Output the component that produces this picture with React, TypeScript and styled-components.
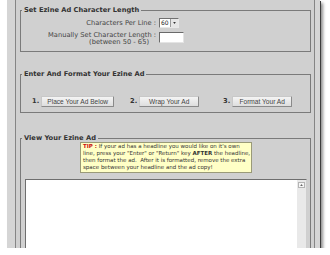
import React from 'react';
import styled, { createGlobalStyle } from 'styled-components';

const GlobalStyle = createGlobalStyle`
  html, body {
    margin: 0;
    padding: 0;
    background: #fff;
  }
  body {
    font-family: "DejaVu Sans", Verdana, sans-serif;
  }
`;

/* outer framed panel with the drop shadow */
const Frame = styled.div`
  box-sizing: border-box;
  width: 313px;
  height: 248px;
  margin-left: 7px;
  padding: 0 5px 0 8px;
  background: #d5d5d5;
  box-shadow: 1px 1px 0 #3c3c3c, 3px 3px 3px rgba(0, 0, 0, 0.45);
  overflow: hidden;
  display: flex;
`;

const Inner = styled.div`
  flex: 1;
  display: flex;
  flex-direction: column;
  padding: 6px 3px 0 4px;
  border-left: 1px solid #858585;
  border-right: 1px solid #858585;
  background: #d0d0d0;
`;

const Group = styled.fieldset<{ $gapTop?: number }>`
  margin: ${p => p.$gapTop ?? 0}px 0 0;
  padding: 0;
  min-width: 0;
  border: 1px solid #7a7a7a;
`;

const Legend = styled.legend`
  margin-left: 1px;
  padding: 0 2px;
  font: bold 6.7px/8px "DejaVu Sans", Verdana, sans-serif;
  color: #333;
`;

/* character length settings */
const SettingsGrid = styled.div`
  display: grid;
  grid-template-columns: 135px auto;
  column-gap: 3px;
  row-gap: 4px;
  padding: 4px 0 5px;
`;

const Label = styled.div<{ $lh?: number }>`
  font-size: 6.7px;
  line-height: ${p => p.$lh ?? 10}px;
  color: #444;
  text-align: right;
  white-space: nowrap;
  align-self: ${p => (p.$lh ? 'start' : 'center')};
`;

const LabelNote = styled.span`
  display: block;
  padding-right: 7px;
`;

const Select = styled.div`
  display: flex;
  box-sizing: border-box;
  width: 20px;
  height: 10px;
  border: 1px solid;
  border-color: #707070 #e8e8e8 #e8e8e8 #707070;
  background: #fff;
  justify-self: start;
`;

const SelectValue = styled.span`
  flex: 1;
  padding-left: 1px;
  font-size: 6px;
  line-height: 8px;
  color: #222;
`;

const SelectArrow = styled.span`
  display: flex;
  align-items: center;
  justify-content: center;
  width: 7px;
  background: #e6e6e6;
  border-left: 1px solid #9a9a9a;
`;

const TextInput = styled.input`
  box-sizing: border-box;
  width: 25px;
  height: 11px;
  margin: 0;
  padding: 0;
  border: 1px solid;
  border-color: #6a6a6a #e4e4e4 #e4e4e4 #6a6a6a;
  background: #fff;
  justify-self: start;
`;

/* format steps */
const Steps = styled.div`
  display: grid;
  grid-template-columns: 98px 93px 1fr;
  padding: 18px 0 5px 11px;
`;

const Step = styled.div`
  display: flex;
  align-items: center;
`;

const StepNum = styled.span`
  font: bold 6.7px/11px "DejaVu Sans", Verdana, sans-serif;
  color: #333;
  margin-right: 2px;
`;

const Button = styled.button<{ $w: number }>`
  box-sizing: border-box;
  width: ${p => p.$w}px;
  height: 11px;
  margin: 0;
  padding: 0;
  font: 6.6px/9px "Liberation Sans", Arial, sans-serif;
  color: #444;
  background: linear-gradient(#f4f4f4, #dedede);
  border: 1px solid;
  border-color: #c8c8c8 #8a8a8a #8a8a8a #c8c8c8;
  border-radius: 1px;
`;

/* view area */
const Tip = styled.div`
  box-sizing: border-box;
  width: 172px;
  margin-left: 59px;
  padding: 0 2px 1px;
  background: #ffffc6;
  border: 1px solid #9a9a78;
  font-size: 5.5px;
  line-height: 7px;
  color: #333;
  white-space: nowrap;
  overflow: hidden;
`;

const TipMark = styled.b`
  color: #cc1111;
`;

const TextBox = styled.div`
  display: flex;
  height: 90px;
  margin: 6px 3px 0 4px;
  border: 1px solid;
  border-color: #6e6e6e #cfcfcf #cfcfcf #6e6e6e;
  background: #fff;
`;

const Area = styled.textarea`
  flex: 1;
  margin: 0;
  padding: 2px;
  border: none;
  resize: none;
  outline: none;
  background: #fff;
`;

const ScrollTrack = styled.div`
  width: 9px;
  background: #e9e9e9;
  display: flex;
  flex-direction: column;
  align-items: center;
  padding-top: 2px;
`;

const ScrollArrow = styled.div`
  box-sizing: border-box;
  width: 7px;
  height: 6px;
  border: 1px solid #b4b4b4;
  background: #f6f6f6;
  display: flex;
  align-items: center;
  justify-content: center;
`;

const Caret = ({ up, color = '#333' }: { up?: boolean; color?: string }) => (
  <svg width="3" height="2" viewBox="0 0 4 3">
    <path d={up ? 'M0 3 L2 0 L4 3 Z' : 'M0 0 L4 0 L2 3 Z'} fill={color} />
  </svg>
);

const App: React.FC = () => {
  return (
    <>
      <GlobalStyle />
      <Frame>
        <Inner>
          <Group>
            <Legend>Set Ezine Ad Character Length</Legend>
            <SettingsGrid>
              <Label>Characters Per Line :</Label>
              <Select>
                <SelectValue>60</SelectValue>
                <SelectArrow>
                  <Caret />
                </SelectArrow>
              </Select>
              <Label $lh={7}>
                Manually Set Character Length :
                <LabelNote>(between 50 - 65)</LabelNote>
              </Label>
              <TextInput type="text" />
            </SettingsGrid>
          </Group>

          <Group $gapTop={18}>
            <Legend>Enter And Format Your Ezine Ad</Legend>
            <Steps>
              <Step>
                <StepNum>1.</StepNum>
                <Button $w={73}>Place Your Ad Below</Button>
              </Step>
              <Step>
                <StepNum>2.</StepNum>
                <Button $w={60}>Wrap Your Ad</Button>
              </Step>
              <Step>
                <StepNum>3.</StepNum>
                <Button $w={60}>Format Your Ad</Button>
              </Step>
            </Steps>
          </Group>

          <Group $gapTop={21}>
            <Legend>View Your Ezine Ad</Legend>
            <Tip>
              <TipMark>TIP :</TipMark> If your ad has a headline you would like on it's own
              <br />
              line, press your "Enter" or "Return" key <b>AFTER</b> the headline,
              <br />
              then format the ad.&nbsp; After it is formatted, remove the extra
              <br />
              space between your headline and the ad copy!
            </Tip>
            <TextBox>
              <Area />
              <ScrollTrack>
                <ScrollArrow>
                  <Caret up color="#666" />
                </ScrollArrow>
              </ScrollTrack>
            </TextBox>
          </Group>
        </Inner>
      </Frame>
    </>
  );
};

export default App;
